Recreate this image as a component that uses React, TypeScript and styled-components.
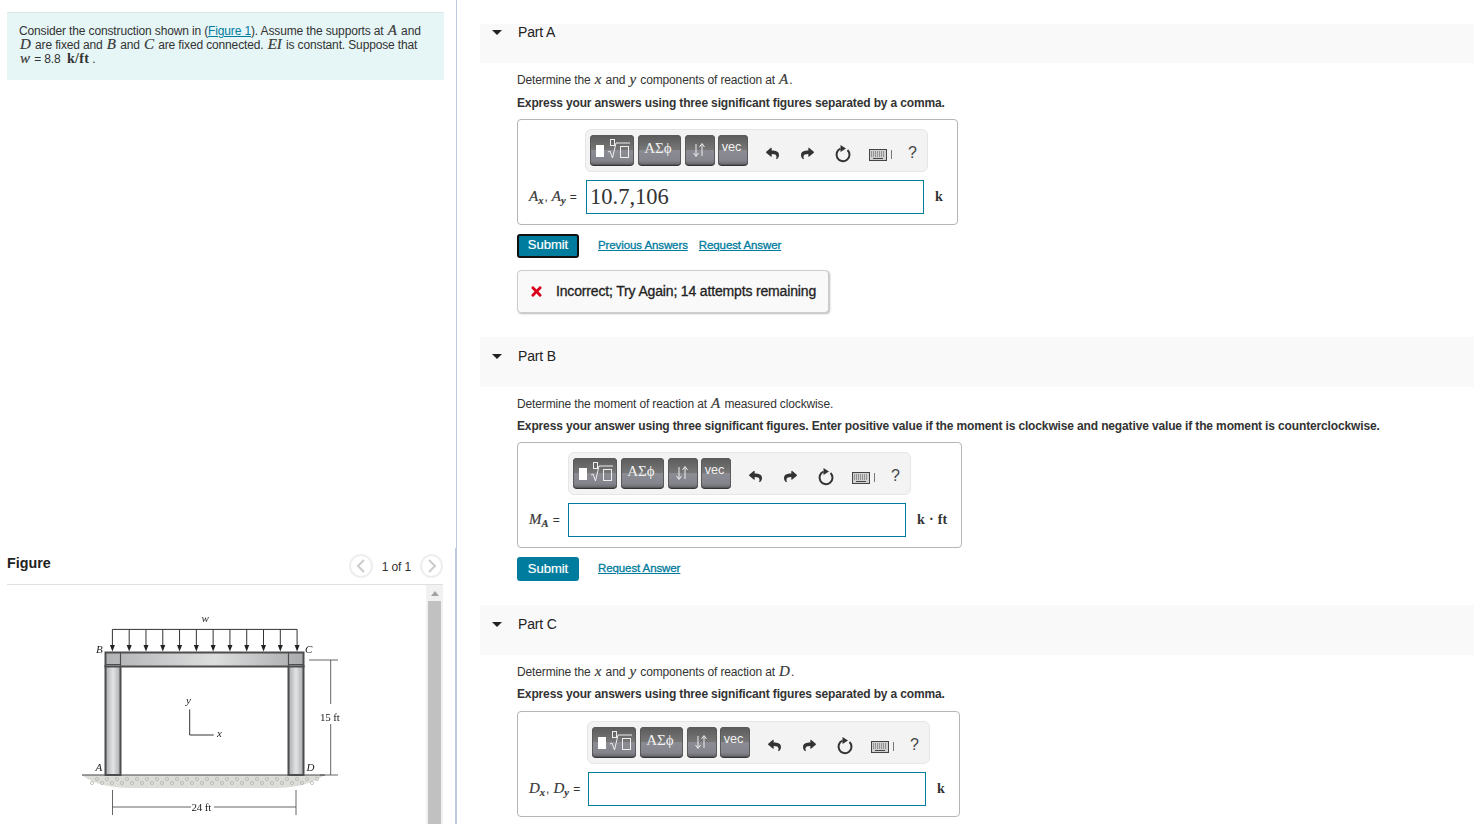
import React from "react";
import styled, { createGlobalStyle } from "styled-components";
import { FaReply, FaShare, FaTimes } from "react-icons/fa";

const Global = createGlobalStyle`
  html, body { margin: 0; padding: 0; height: 824px; overflow: hidden; background: #fff; }
  body { font-family: "Liberation Sans", Arial, sans-serif; font-size: 12px; letter-spacing: -.14px; line-height: 14px; color: #333; }
  * { box-sizing: border-box; }
`;

const Page = styled.div`display: flex; width: 1474px; height: 824px; overflow: hidden;`;
const LeftPane = styled.aside`display: flex; flex-direction: column; width: 457px; flex: none;`;
const IntroSection = styled.section`height: 548px; padding: 12px 0 0 7px; border-right: 1px solid #bccbdd;`;
const InfoBox = styled.div`width: 437px; height: 68px; padding: 11px 20px 0 12px; background: #e6f5f6; border-top: 1px solid #dde5e6;`;
const A = styled.a`color: #007c9e; text-decoration: underline;`;
const V = styled.i`padding: 0 1px; font-family: "Liberation Serif", serif; font-size: 15px; line-height: 0; font-style: italic; letter-spacing: 0; color: #3a3a3a; -webkit-text-stroke: .2px #3a3a3a;`;
const Unit = styled.span`font-family: "Liberation Serif", serif; font-size: 14px; line-height: 0; font-weight: bold; letter-spacing: .3px; color: #333;`;
const FigureSection = styled.section`flex: 1; display: flex; flex-direction: column; border-right: 2px solid #bccbdd; min-height: 0;`;
const FigureHeader = styled.div`display: flex; align-items: center; justify-content: space-between; width: 436px; margin-left: 7px; padding: 6px 0; border-bottom: 1px solid #e0e0e0;`;
const FigureTitle = styled.h2`margin: 0 0 6px; font-size: 14.3px; font-weight: bold; letter-spacing: 0; color: #222;`;
const Pager = styled.div`display: flex; align-items: center; gap: 9px;`;
const PagerCount = styled.span`padding-top: 2px;`;
const PagerButton = styled.button<{ $w: number }>`display: flex; align-items: center; justify-content: center; width: ${(p) => p.$w}px; height: 24px; padding: 0; background: #fff; border: 2px solid #eee; border-radius: 50%;`;
const FigureViewport = styled.div`flex: 1; display: flex; margin-left: 7px; width: 436px; min-height: 0; overflow: hidden;`;
const FigureCanvas = styled.div`flex: 1; padding: 15px 0 0 53px;`;
const FigureSvg = styled.svg`display: block; filter: blur(.5px);`;
const ScrollTrack = styled.div`display: flex; flex-direction: column; align-items: center; width: 17px; background: #f1f1f1;`;
const ScrollArrow = styled.div`margin: 6px 0 5px; border-left: 4px solid transparent; border-right: 4px solid transparent; border-bottom: 5px solid #a3a3a3;`;
const ScrollThumb = styled.div`flex: 1; width: 13px; background: #c1c1c1;`;

const RightPane = styled.main`flex: 1; min-width: 0; padding: 24px 0 0 23px;`;
const Part = styled.section<{ $gap: number }>`margin-bottom: ${(p) => p.$gap}px;`;
const PartHeader = styled.header<{ $h: number; $top: number }>`display: flex; align-items: flex-start; gap: 16px; height: ${(p) => p.$h}px; padding: ${(p) => p.$top}px 0 0 12px; background: #f9f9f9;`;
const Caret = styled.span`width: 0; height: 0; margin-top: 5px; border-left: 5.5px solid transparent; border-right: 5.5px solid transparent; border-top: 5px solid #222;`;
const PartTitle = styled.h3`margin: 0; font-size: 14px; font-weight: normal; color: #222;`;
const PartBody = styled.div`padding: 9px 0 0 37px;`;
const Prompt = styled.p`margin: 0; height: 14px; padding-top: 1px;`;
const Instruction = styled.p<{ $top: number }>`margin: ${(p) => p.$top}px 0 0; height: 14px; font-weight: bold; color: #333;`;
const AnswerBox = styled.div<{ $w: number; $label: number; $top: number }>`display: grid; grid-template-columns: ${(p) => p.$label}px 338px 1fr; grid-template-rows: 43px 34px; row-gap: 8px; align-items: center; width: ${(p) => p.$w}px; height: 106px; margin-top: ${(p) => p.$top}px; padding: 9px 10px 10px; border: 1px solid #b5b5b5; border-radius: 4px;`;
const Toolbar = styled.div<{ $shift: number }>`grid-column: 2 / 4; display: flex; width: 343px; height: 43px; margin-left: ${(p) => p.$shift}px; padding: 5px 0 0 4px; background: #f3f3f3; border: 1px solid #e6e6e6; border-radius: 6px;`;
const ToolButtons = styled.div`display: flex; gap: 4px;`;
const ToolButton = styled.button<{ $w: number; $nudge?: number; $shiftText?: number }>`display: flex; align-items: flex-start; justify-content: center; width: ${(p) => p.$w}px; height: 31px; margin-left: ${(p) => p.$nudge ?? 0}px; padding: 0 ${(p) => p.$shiftText ?? 0}px 0 0; border: 0; border-bottom: 1px solid #333; border-radius: 4px; color: #f2f2f2; background: linear-gradient(#5b5b5b 0, #777 50%, #8c8c94 52%, #84848c 85%, #66666c 100%); box-shadow: inset 0 0 0 1px #5a5a5a;`;
const SymbolText = styled.span`margin-top: 4px; font-family: "Liberation Serif", serif; font-size: 15px; line-height: 18px; letter-spacing: 0; color: #f2f2f2;`;
const VecText = styled.span`margin-top: 4px; font-family: "Liberation Sans", sans-serif; font-size: 12.7px; line-height: 16px; letter-spacing: 0; color: #f2f2f2;`;
const ToolIcons = styled.div`display: flex; align-items: center; margin: 3px 0 0 7px; height: 30px; color: #333;`;
const IconCell = styled.span`display: flex; align-items: center; justify-content: center; width: 35px;`;
const KeyboardCell = styled.span`display: flex; align-items: center; gap: 4px; margin: 3px 0 0 9px;`;
const Pipe = styled.span`width: 1px; height: 9px; background: #777;`;
const Help = styled.span`margin-left: 16px; font-size: 16px; letter-spacing: 0; color: #444;`;
const MathLabel = styled.label`font-size: 12px; white-space: nowrap; sub { font-size: 10.5px; line-height: 0; font-weight: bold; vertical-align: -3px; }`;
const MathInput = styled.div`display: flex; align-items: center; height: 34px; padding-left: 3px; border: 1px solid #007c9e; font-family: "Liberation Serif", serif; font-size: 22.5px; letter-spacing: 0; color: #333;`;
const UnitCell = styled.div`padding-left: 11px;`;
const Actions = styled.div`display: flex; align-items: center; margin-top: 9px; height: 24px;`;
const Submit = styled.button<{ $focused?: boolean }>`width: 62px; height: 24px; padding: 0 0 ${(p) => (p.$focused ? 4 : 2)}px; margin-right: 19px; font: 13px "Liberation Sans", sans-serif; color: #fff; -webkit-text-stroke: .2px #fff; background: #007c9e; border: ${(p) => (p.$focused ? "2px solid #111" : "0")}; border-radius: 3px;`;
const ActionLink = styled.a`margin: 0 11px 3px 0; font-size: 11.5px; letter-spacing: -.1px; color: #007c9e; -webkit-text-stroke: .3px #007c9e; text-decoration: underline;`;
const Feedback = styled.div`display: flex; align-items: center; gap: 12px; width: 312px; height: 43px; margin-top: 12px; padding: 0 0 1px 11px; font-size: 14px; letter-spacing: -.16px; color: #222; -webkit-text-stroke: .3px #222; background: #f9f9f9; border: 1px solid #ccc; border-radius: 4px; box-shadow: 1px 1px 2px #bbb;`;
const CrossIcon = styled(FaTimes)`color: #d9001b; width: 15px; height: 15px;`;

const RadicalIcon = () => (
  <svg width="36" height="24" viewBox="0 0 36 24" fill="none">
    <rect x="2" y="10" width="8" height="12" fill="#fff" />
    <rect x="16.500" y="4.500" width="4" height="6" stroke="#eee" />
    <path d="M14 17l2-1 2.500 7 3.500-15h14" stroke="#eee" strokeWidth="1" />
    <rect x="26.500" y="11.500" width="8" height="11" stroke="#eee" />
  </svg>
);
const ArrowsIcon = () => (
  <svg width="14" height="24" viewBox="0 0 14 24" fill="none" stroke="#eee" strokeWidth="1" style={{ marginTop: 3 }}>
    <path d="M4 6v12M1.500 15l2.500 3.500 2.500-3.500" />
    <path d="M10 18V6M7.500 9l2.500-3.500 2.500 3.500" />
  </svg>
);
const RotateIcon = () => (
  <svg width="18" height="19" viewBox="0 0 18 19" fill="none">
    <path d="M13.500 6a6.500 6.500 0 1 1-7-1.300" stroke="#333" strokeWidth="2" />
    <path d="M6.500 1l5.500 3.500-5.500 3.500z" fill="#333" />
  </svg>
);
const KeyboardIcon = () => (
  <svg width="18" height="12" viewBox="0 0 18 12">
    <rect x=".5" y=".5" width="17" height="11" fill="#d0d0d0" stroke="#444" />
    <path d="M2 3h14M2 5h14M2 7h14" stroke="#555" strokeDasharray="1 1" />
    <path d="M4 9.500h10" stroke="#444" />
  </svg>
);

const Chevron = ({ flip }: { flip?: boolean }) => (
  <svg width="10" height="14" viewBox="0 0 10 14" fill="none" stroke="#ccc" strokeWidth="2">
    <path d={flip ? "M2 1l6 6-6 6" : "M8 1L2 7l6 6"} />
  </svg>
);

const FrameFigure = () => {
  const arrows = Array.from({ length: 12 }, (_, i) => 112.4 + i * 16.79);
  const dots = Array.from({ length: 46 }, (_, i) => 92 + i * 5);
  return (
    <FigureSvg width="300" height="224" viewBox="60 600 300 224">
      <defs>
        <linearGradient id="col" x1="0" x2="1" y1="0" y2="0">
          <stop offset="0" stopColor="#a9abad" />
          <stop offset=".5" stopColor="#e3e4e5" />
          <stop offset="1" stopColor="#a9abad" />
        </linearGradient>
        <linearGradient id="beam" x1="0" x2="1" y1="0" y2="0">
          <stop offset="0" stopColor="#b2b3b5" />
          <stop offset=".55" stopColor="#dcdddd" />
          <stop offset="1" stopColor="#a9abad" />
        </linearGradient>
      </defs>
      <path d="M82 775h243c-12 8-28 13-50 13H130c-22 0-38-5-48-13z" fill="#dcdcd8" />
      {dots.map((x, i) => (
        <circle key={x} cx={x} cy={i % 2 ? 779 : 783} r="1.6" fill="none" stroke="#b5b5b0" strokeWidth=".8" />
      ))}
      <path d="M82 775h243" stroke="#444" strokeWidth="1" />
      <rect x="105.500" y="666" width="15" height="109" fill="url(#col)" stroke="#4c4d4f" strokeWidth="2" />
      <rect x="288.500" y="666" width="15" height="109" fill="url(#col)" stroke="#4c4d4f" strokeWidth="2" />
      <rect x="105.500" y="652.500" width="198" height="14" fill="url(#beam)" stroke="#4c4d4f" strokeWidth="2" />
      <path d="M105 664.500h15M289 664.500h15M120.500 652v14M288.500 652v14" stroke="#4c4d4f" strokeWidth="1.200" />
      <path d="M112.400 629.400H297.100" stroke="#333" strokeWidth="1" />
      {arrows.map((x) => (
        <g key={x}>
          <path d={`M${x} 629.400V647`} stroke="#333" strokeWidth="1" />
          <path d={`M${x - 2.5} 645l2.500 6.500 2.500-6.500z`} fill="#222" />
        </g>
      ))}
      <path d="M189.700 709.500v25.500h24" fill="none" stroke="#333" strokeWidth="1" />
      <path d="M309 660h29M320 775h18M330.700 660v44M330.700 724v51M112.500 790v25M296 790v25M112.500 807H191M214 807h82" stroke="#555" strokeWidth=".9" fill="none" />
      <g fontFamily="Liberation Serif" fontSize="11" fill="#222">
        <text x="320" y="720.500">15 ft</text>
        <text x="191.500" y="810.500">24 ft</text>
        <g fontStyle="italic">
          <text x="201.500" y="622">w</text>
          <text x="96" y="652.500">B</text>
          <text x="305" y="652.500">C</text>
          <text x="95.500" y="770.500">A</text>
          <text x="306.500" y="770.500">D</text>
          <text x="186" y="704">y</text>
          <text x="217" y="737">x</text>
        </g>
      </g>
    </FigureSvg>
  );
};

const AnswerPanel = ({ w, label, top, shift, math, value, unit }: { w: number; label: number; top: number; shift: number; math: React.ReactNode; value?: string; unit: string }) => (
  <AnswerBox $w={w} $label={label} $top={top}>
    <span />
    <Toolbar $shift={shift}>
      <ToolButtons>
        <ToolButton $w={44}><RadicalIcon /></ToolButton>
        <ToolButton $w={43} $shiftText={3}><SymbolText>ΑΣϕ</SymbolText></ToolButton>
        <ToolButton $w={30} $shiftText={3}><ArrowsIcon /></ToolButton>
        <ToolButton $w={30} $nudge={-1} $shiftText={3}><VecText>vec</VecText></ToolButton>
      </ToolButtons>
      <ToolIcons>
        <IconCell><FaReply size={13} /></IconCell>
        <IconCell><FaShare size={13} /></IconCell>
        <IconCell><RotateIcon /></IconCell>
        <KeyboardCell><KeyboardIcon /><Pipe /></KeyboardCell>
        <Help>?</Help>
      </ToolIcons>
    </Toolbar>
    <MathLabel>{math}</MathLabel>
    <MathInput>{value}</MathInput>
    <UnitCell><Unit>{unit}</Unit></UnitCell>
  </AnswerBox>
);

export default function App() {
  return (
    <Page>
      <Global />
      <LeftPane>
        <IntroSection>
          <InfoBox>
            Consider the construction shown in (<A>Figure 1</A>). Assume the supports at <V>A</V> and <V>D</V> are fixed and <V>B</V> and <V>C</V> are fixed connected. <V>EI</V> is constant. Suppose that <V>w</V> = 8.8 &nbsp;<Unit>k/ft</Unit> .
          </InfoBox>
        </IntroSection>
        <FigureSection>
          <FigureHeader>
            <FigureTitle>Figure</FigureTitle>
            <Pager>
              <PagerButton $w={24}><Chevron /></PagerButton>
              <PagerCount>1 of 1</PagerCount>
              <PagerButton $w={23}><Chevron flip /></PagerButton>
            </Pager>
          </FigureHeader>
          <FigureViewport>
            <FigureCanvas><FrameFigure /></FigureCanvas>
            <ScrollTrack><ScrollArrow /><ScrollThumb /></ScrollTrack>
          </FigureViewport>
        </FigureSection>
      </LeftPane>
      <RightPane>
        <Part $gap={24}>
          <PartHeader $h={39} $top={1}><Caret /><PartTitle>Part A</PartTitle></PartHeader>
          <PartBody>
            <Prompt>Determine the <V>x</V> and <V>y</V> components of reaction at <V>A</V>.</Prompt>
            <Instruction $top={10}>Express your answers using three significant figures separated by a comma.</Instruction>
            <AnswerPanel w={441} label={58} top={9} shift={-1} value="10.7,106" unit="k" math={<><V>A<sub>x</sub></V>, <V>A<sub>y</sub></V> =</>} />
            <Actions>
              <Submit $focused>Submit</Submit>
              <ActionLink>Previous Answers</ActionLink>
              <ActionLink>Request Answer</ActionLink>
            </Actions>
            <Feedback><CrossIcon />Incorrect; Try Again; 14 attempts remaining</Feedback>
          </PartBody>
        </Part>
        <Part $gap={24}>
          <PartHeader $h={50} $top={12}><Caret /><PartTitle>Part B</PartTitle></PartHeader>
          <PartBody>
            <Prompt>Determine the moment of reaction at <V>A</V> measured clockwise.</Prompt>
            <Instruction $top={9}>Express your answer using three significant figures. Enter positive value if the moment is clockwise and negative value if the moment is counterclockwise.</Instruction>
            <AnswerPanel w={445} label={40} top={9} shift={0} unit="k · ft" math={<><V>M<sub>A</sub></V> =</>} />
            <Actions>
              <Submit>Submit</Submit>
              <ActionLink>Request Answer</ActionLink>
            </Actions>
          </PartBody>
        </Part>
        <Part $gap={0}>
          <PartHeader $h={50} $top={12}><Caret /><PartTitle>Part C</PartTitle></PartHeader>
          <PartBody>
            <Prompt>Determine the <V>x</V> and <V>y</V> components of reaction at <V>D</V>.</Prompt>
            <Instruction $top={9}>Express your answers using three significant figures separated by a comma.</Instruction>
            <AnswerPanel w={443} label={60} top={10} shift={-1} unit="k" math={<><V>D<sub>x</sub></V>, <V>D<sub>y</sub></V> =</>} />
          </PartBody>
        </Part>
      </RightPane>
    </Page>
  );
}
